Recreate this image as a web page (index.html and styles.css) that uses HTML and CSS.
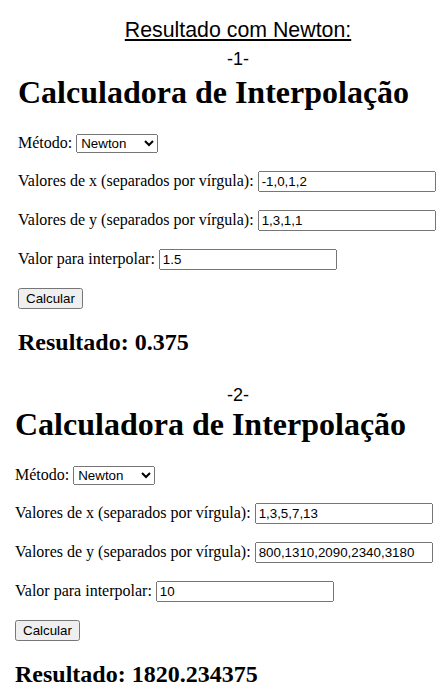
FILE: index.html
```html
<!DOCTYPE html>
<html lang="pt">
<head>
<meta charset="utf-8">
<title>Resultado com Newton</title>
<link rel="stylesheet" href="styles.css">
</head>
<body>
<header class="doc-head">
  <div class="doc-title">Resultado com Newton:</div>
  <div class="sec-num">-1-</div>
</header>
<section class="calc calc-one">
  <h1 class="calc-title">Calculadora de Interpolação</h1>
  <div class="row row-first">
    <label class="lbl">Método:</label>
    <select class="sel"><option>Newton</option></select>
  </div>
  <div class="row">
    <label class="lbl">Valores de x (separados por vírgula):</label>
    <input class="txt" type="text" value="-1,0,1,2">
  </div>
  <div class="row">
    <label class="lbl">Valores de y (separados por vírgula):</label>
    <input class="txt" type="text" value="1,3,1,1">
  </div>
  <div class="row">
    <label class="lbl">Valor para interpolar:</label>
    <input class="txt" type="text" value="1.5">
  </div>
  <div class="row">
    <button class="btn" type="button">Calcular</button>
  </div>
  <h2 class="result">Resultado: 0.375</h2>
</section>
<div class="sec-num sec-two">-2-</div>
<section class="calc calc-two">
  <h1 class="calc-title">Calculadora de Interpolação</h1>
  <div class="row row-first">
    <label class="lbl">Método:</label>
    <select class="sel"><option>Newton</option></select>
  </div>
  <div class="row">
    <label class="lbl">Valores de x (separados por vírgula):</label>
    <input class="txt" type="text" value="1,3,5,7,13">
  </div>
  <div class="row">
    <label class="lbl">Valores de y (separados por vírgula):</label>
    <input class="txt" type="text" value="800,1310,2090,2340,3180">
  </div>
  <div class="row">
    <label class="lbl">Valor para interpolar:</label>
    <input class="txt" type="text" value="10">
  </div>
  <div class="row">
    <button class="btn" type="button">Calcular</button>
  </div>
  <h2 class="result">Resultado: 1820.234375</h2>
</section>
</body>
</html>
```

FILE: styles.css
```css
html, body {
  margin: 0;
  padding: 0;
  background: #ffffff;
}
body {
  font-family: "Liberation Serif", "Times New Roman", serif;
  font-size: 16px;
  color: #000000;
}
.doc-head {
  padding-left: 28px;
  text-align: center;
  font-family: "Liberation Sans", Arial, sans-serif;
}
.doc-title {
  margin-top: 18px;
  font-size: 21.33px;
  line-height: 24px;
  text-decoration: underline;
  text-underline-offset: 2px;
}
.sec-num {
  margin-top: 7px;
  font-family: "Liberation Sans", Arial, sans-serif;
  font-size: 18px;
  line-height: 20px;
  text-align: center;
}
.sec-two {
  margin-top: 29px;
  padding-left: 28px;
}
.calc {
  display: flex;
  flex-direction: column;
  align-items: flex-start;
}
.calc-one {
  padding-left: 18px;
}
.calc-two {
  padding-left: 15px;
}
.calc-title {
  margin: 5px 0 0 0;
  font-size: 32px;
  line-height: 36px;
  font-weight: bold;
}
.calc-two .calc-title {
  margin-top: 1px;
}
.row {
  display: flex;
  align-items: baseline;
  gap: 4px;
  margin-top: 18px;
}
.row-first {
  margin-top: 24px;
}
.lbl {
  line-height: 18px;
}
.sel {
  width: 82px;
  height: 19px;
  font: 13.33px "Liberation Sans", Arial, sans-serif;
  color: #000;
}
.txt {
  width: 178px;
  height: 21px;
  box-sizing: border-box;
  padding: 1px 2px;
  font: 13.33px "Liberation Sans", Arial, sans-serif;
  color: #000;
}
.btn {
  height: 21px;
  width: 65px;
  box-sizing: border-box;
  font: 13.33px "Liberation Sans", Arial, sans-serif;
  color: #000;
}
.result {
  margin: 19px 0 0 0;
  font-size: 24px;
  line-height: 28px;
  font-weight: bold;
}
```
